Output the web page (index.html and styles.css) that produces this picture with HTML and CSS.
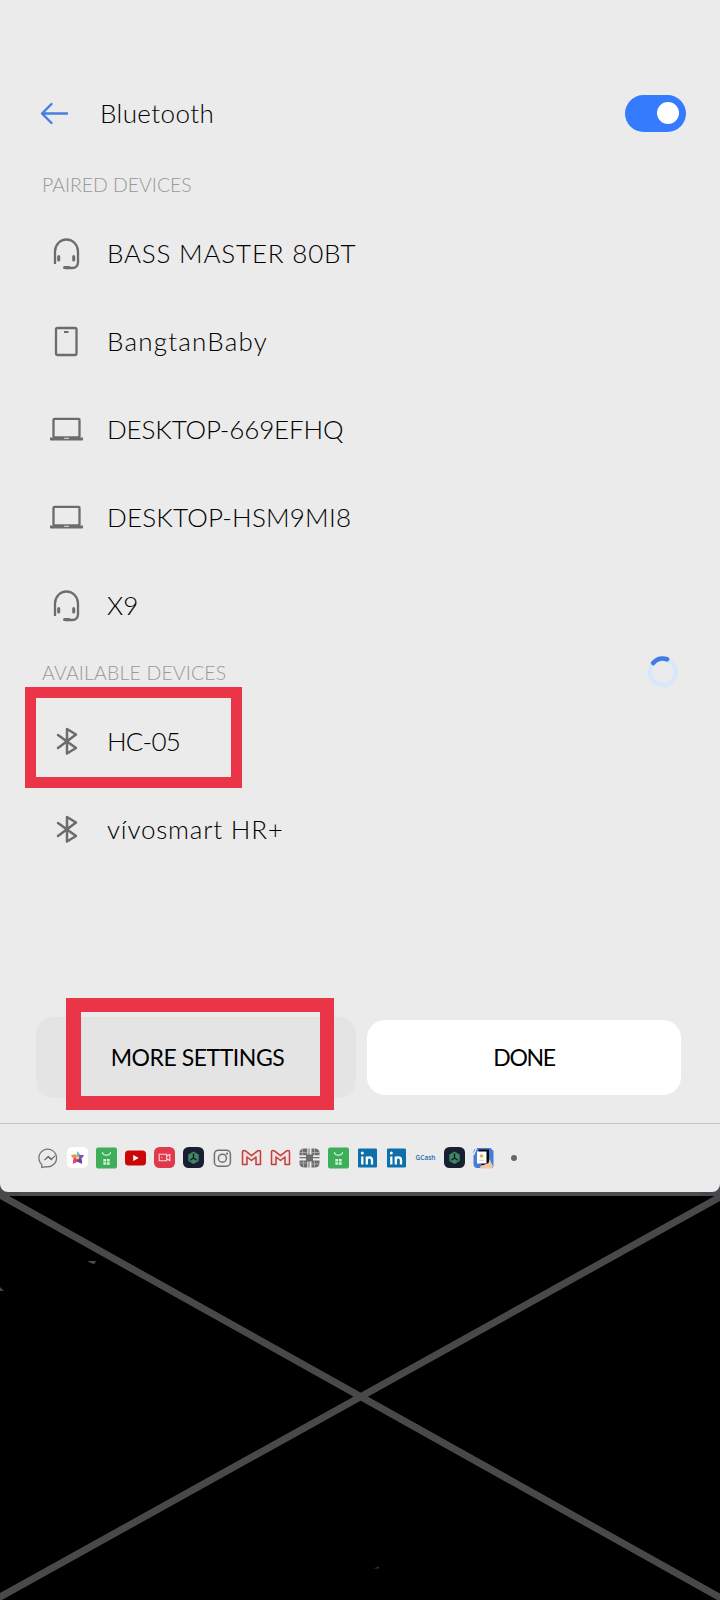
FILE: index.html
```html
<!DOCTYPE html>
<html lang="en">
<head>
<meta charset="utf-8">
<title>Bluetooth</title>
<link rel="stylesheet" href="styles.css">
</head>
<body>
<svg class="defs" width="0" height="0">
  <symbol id="headset" viewBox="0 0 34 34"><g fill="none" stroke="#6c6c6c" stroke-width="2.300"><path d="M6 28V15.500a11.500 12 0 0 1 23 0V26q0 6-6 6h-7" stroke-linejoin="round"/><path d="M15.500 31.500h4.500" stroke-width="3" stroke-linecap="round"/><path d="M9.700 20.500v3.500M24.700 20.500v3.500" stroke-width="3" stroke-linecap="round"/></g></symbol>
  <symbol id="laptop" viewBox="0 0 34 34"><rect x="4.500" y="6.900" width="26" height="18.500" rx="1" fill="none" stroke="#6c6c6c" stroke-width="2.300"/><path d="M1 25.500h33v2q0 1-1 1H2q-1 0-1-1z" fill="#6c6c6c"/><path d="M15 26.300h5" stroke="#ddd" stroke-width="1"/></symbol>
  <symbol id="tablet" viewBox="0 0 34 34"><rect x="7" y="4" width="20.500" height="27" rx="1.500" fill="none" stroke="#6c6c6c" stroke-width="2.300"/><path d="M15 8h4.500" stroke="#6c6c6c" stroke-width="2"/></symbol>
  <symbol id="bt" viewBox="0 0 34 34"><path d="M9 11l18 13-9 5.500V5l9 5.500L9 24" fill="none" stroke="#6c6c6c" stroke-width="2.500" stroke-linejoin="round" stroke-linecap="round"/></symbol>
  <symbol id="bag" viewBox="0 0 22 22"><rect x=".5" y=".5" width="21" height="21" rx="2" fill="#3eae5b"/><path d="M7 5q0 3.200 4 3.200t4-3.200" fill="none" stroke="#cff5d7" stroke-width="1.200"/><path d="M7.800 12h2.800v2.600H7.800zm3.600 0h2.800v2.600h-2.800zM7.800 15.200h2.800v2.600H7.800zm3.600 0h2.800v2.600h-2.800z" fill="#cff5d7"/></symbol>
  <symbol id="hex" viewBox="0 0 22 22"><rect x=".5" y="0" width="21" height="21" rx="5.500" fill="#171f30"/><path d="M11 4.500l5.200 3v6.500L11 17l-5.200-3V7.500z" fill="#3f8867"/><path d="M11 6.500V11l-3.300 2.300M11 11l3.300 2.300" fill="none" stroke="#101a22" stroke-width="1.400"/></symbol>
  <symbol id="gmail" viewBox="0 0 22 22"><path d="M2 4.700q0-1.300 1.300-1.300 1 0 2 .8L11 8.700l5.700-4.500q1-.8 2-.8Q20 3.400 20 4.700V17.500h-4.500V10L11 13.500 6.500 10v7.500H2z" fill="#f3dddd" stroke="#bd423e" stroke-width="1.500" stroke-linejoin="round"/></symbol>
  <symbol id="linkedin" viewBox="0 0 22 22"><rect x="1.500" y="1.500" width="19" height="19" rx="1.200" fill="#0e70aa"/><path d="M5.800 9.500v8M10.300 9.500v8M10.300 13q0-2.600 2.700-2.600 2.500 0 2.500 2.800v4.300" fill="none" stroke="#fff" stroke-width="2.300"/><circle cx="5.800" cy="6" r="1.500" fill="#fff"/></symbol>
</svg>

<main class="panel">
  <header class="appbar">
    <svg class="back" viewBox="0 0 30 24"><path d="M27 12.500H2M11.500 3L2 12.500l9.500 9.500" fill="none" stroke="#467fe0" stroke-width="2.400" stroke-linecap="round" stroke-linejoin="round"/></svg>
    <h1 class="title">Bluetooth</h1>
    <span class="switch"><span class="knob"></span></span>
  </header>

  <h2 class="section s-paired">PAIRED DEVICES</h2>
  <ul class="list">
    <li class="row"><svg class="icon"><use href="#headset"/></svg><span class="t-bass">BASS MASTER 80BT</span></li>
    <li class="row"><svg class="icon"><use href="#tablet"/></svg><span class="t-baby">BangtanBaby</span></li>
    <li class="row"><svg class="icon"><use href="#laptop"/></svg><span class="t-desk1">DESKTOP-669EFHQ</span></li>
    <li class="row"><svg class="icon"><use href="#laptop"/></svg><span class="t-desk2">DESKTOP-HSM9MI8</span></li>
    <li class="row"><svg class="icon"><use href="#headset"/></svg><span class="t-x9">X9</span></li>
  </ul>
  <div class="available">
    <h2 class="section s-avail">AVAILABLE DEVICES</h2>
    <svg class="spinner" viewBox="0 0 32 32"><circle cx="16" cy="16" r="13" fill="none" stroke="#d7e8fa" stroke-width="4.600"/><path d="M6.200 7A13 13 0 0 1 20 3.300" fill="none" stroke="#427ce2" stroke-width="4.600" stroke-linecap="round"/></svg>
  </div>
  <ul class="list">
    <li class="row"><svg class="icon"><use href="#bt"/></svg><span class="t-hc">HC-05</span><i class="mark mark-device"></i></li>
    <li class="row"><svg class="icon"><use href="#bt"/></svg><span class="t-vivo">vívosmart HR+</span></li>
  </ul>

  <div class="actions">
    <button class="btn more"><span class="t-more">MORE SETTINGS</span><i class="mark mark-more"></i></button>
    <button class="btn done"><span class="t-done">DONE</span></button>
  </div>

  <footer class="dock">
    <svg class="app" viewBox="0 0 22 22"><path d="M4.300 17.500A8.800 8.800 0 1 1 9 19.700L4.300 20.500z" fill="none" stroke="#747474" stroke-width="1.300"/><path d="M7 13l3.700-3.900 3.200 2.700 3.700-3-3.700 4.100-3.200-2.600z" fill="#666" stroke="#666"/></svg>
    <svg class="app" viewBox="0 0 22 22"><rect x=".5" width="21" height="21" rx="5" fill="#fff"/><g transform="translate(11 10.800)" stroke-width="1" stroke-linejoin="round"><path d="M0-6l2.200 3.500H-2.200L0 0z" fill="#65b9cf" stroke="#65b9cf"/><path d="M-2.200-3l-3.800.7 2.500 3.200L0 0z" fill="#f28b3c" stroke="#f28b3c"/><path d="M-3.500 1l-.7 4.500L0 3.500V0z" fill="#dd3f70" stroke="#dd3f70"/><path d="M0 0v3.500l4.200 2-.7-4.500z" fill="#6c3b9d" stroke="#6c3b9d"/><path d="M2.200-2.500l3.800.2L3.500 1 0 0z" fill="#7754b5" stroke="#7754b5"/><circle r="1.800" fill="#f6cd63"/></g></svg>
    <svg class="app"><use href="#bag"/></svg>
    <svg class="app" viewBox="0 0 22 22"><rect x=".5" y="3.500" width="21" height="15" rx="3.500" fill="#cc0606"/><path d="M8.700 8l5.500 3-5.500 3z" fill="#fff"/></svg>
    <svg class="app" viewBox="0 0 22 22"><rect x=".5" y="0" width="21" height="21" rx="5.500" fill="#df394b"/><path d="M5.700 7.200h7.500v6.500H5.700zM13.500 9l2.800-1.500v6L13.500 12M8 10.500h.8" fill="none" stroke="#ffd9df" stroke-width="1.100"/></svg>
    <svg class="app"><use href="#hex"/></svg>
    <svg class="app" viewBox="0 0 22 22"><g fill="none" stroke="#707070" stroke-width="1.500"><rect x="2.900" y="3.200" width="16" height="16" rx="4"/><circle cx="10.900" cy="11.200" r="4"/></g><circle cx="15.500" cy="6.700" r="1.100" fill="#707070"/></svg>
    <svg class="app"><use href="#gmail"/></svg>
    <svg class="app"><use href="#gmail"/></svg>
    <svg class="app" viewBox="0 0 22 22"><g fill="#6c6c6c"><path d="M6 1.500h2.800v6.800H1V6q0-4.500 5-4.500zM13 1.500h3q5 0 5 4.500v2.300h-8zM1 13.500h7.800v7H6q-5 0-5-4.500zM13 13.500h8V16q0 4.500-5 4.500h-3zM7.500 7.500h7v7h-7z"/><path d="M1 10h20v1.300H1zM10 1.500h1v19h-1z"/></g><path d="M4 1v7M1 5.500h7M16 1v7M13 5.500h8M5 14v6M1 16h7M16 14v6M13 17h8" stroke="#bdbdbd" stroke-width=".7"/></svg>
    <svg class="app"><use href="#bag"/></svg>
    <svg class="app"><use href="#linkedin"/></svg>
    <svg class="app"><use href="#linkedin"/></svg>
    <span class="app gcash">GCash</span>
    <svg class="app"><use href="#hex"/></svg>
    <svg class="app" viewBox="0 0 22 22"><path d="M1 5q0-3 3-4h14l3 3v15q0 2-2 2H4q-3-1-3-4z" fill="#477cdb"/><path d="M1 8l3-7" stroke="#edf3ff" stroke-width="1.400"/><path d="M6 2.500h10.500V18H9z" fill="#080808"/><rect x="4.500" y="4.500" width="9.500" height="12" fill="#fff"/><circle cx="9" cy="9" r="1.800" fill="#e3ac57"/><path d="M6.500 13.200h5" stroke="#f0c794"/><path d="M11 18l5-2 1-4 3.500 7-1 2.500H8l-.5-2z" fill="#f0c6a8"/></svg>
    <span class="app"><i class="dot"></i></span>
  </footer>
</main>

<svg class="void" viewBox="0 1192 720 408"><path d="M0 1185H720V1196H0z" fill="#4e4e4f"/><path d="M0 1192H20V1196H0zM700 1192h20v4h-20z" fill="#48484f"/><path d="M-8 1190.500L728 1602M728 1192.500L-8 1601.500" stroke="#494949" stroke-width="7"/><path d="M87 1261h9l-1.500 3-3-.7z" fill="#4c4c4c"/><path d="M0 1287l4 4H0z" fill="#444449"/><path d="M373 1568.500l6-2v2z" fill="#333"/></svg>
</body>
</html>
```

FILE: styles.css
```css
* { box-sizing: border-box; }
body {
  margin: 0;
  width: 720px;
  height: 1600px;
  overflow: hidden;
  background: #48484f;
  font-family: Lato, "Open Sans", sans-serif;
  font-weight: 300;
  color: #000;
  display: flex;
  flex-direction: column;
}
.defs { position: absolute; }
.panel {
  height: 1192px;
  flex: none;
  padding-top: 65px;
  background: #ebebeb;
  border-radius: 0 0 8px 8px;
  display: flex;
  flex-direction: column;
}
.appbar {
  height: 96px;
  flex: none;
  display: flex;
  align-items: center;
  padding: 0 34px 0 40px;
}
.back { width: 30px; height: 24px; }
.title { margin: 0 0 0 30px; padding-bottom: 1px; font-size: 26px; font-weight: 300; letter-spacing: 0.4px; }
.switch {
  width: 61px;
  height: 37px;
  margin-left: auto;
  padding: 7px;
  border-radius: 19px;
  background: #357bfe;
  display: flex;
  justify-content: flex-end;
}
.knob { width: 22px; height: 22px; border-radius: 50%; background: #fff; }
.section {
  height: 48px;
  margin: 0;
  padding-left: 42px;
  font-size: 19.5px;
  font-weight: 300;
  line-height: 48px;
  color: #999;
}
.list { margin: 0; padding: 0; list-style: none; }
.row {
  position: relative;
  height: 88px;
  padding-left: 49px;
  display: flex;
  align-items: center;
  gap: 24px;
  font-size: 26px;
  line-height: 32px;
  white-space: nowrap;
}
.icon { width: 34px; height: 34px; }
.available { display: flex; align-items: center; justify-content: space-between; padding-right: 41px; }
.spinner { width: 32px; height: 32px; margin-bottom: 2px; }
.mark { position: absolute; border: 11px solid #e93547; }
.mark-device { left: 25px; top: -10px; width: 217px; height: 101px; }
.mark-more { left: 30px; top: -19px; width: 268px; height: 112px; border-width: 14px 14px 14px 15px; }
.actions {
  margin-top: 144px;
  padding: 0 39px 0 36px;
  display: flex;
  justify-content: space-between;
  align-items: center;
}
.btn {
  position: relative;
  border: 0;
  padding: 0 0 1px;
  font: 400 23px Lato, "Open Sans", sans-serif;
  color: #000;
}
.more { width: 320px; height: 81px; padding-left: 3px; border-radius: 18px; background: #e4e4e4; }
.done { width: 314px; height: 75px; border-radius: 18px; background: #fff; }
.dock {
  height: 70px;
  margin-top: 25px;
  padding: 0 0 1px 34px;
  border-top: 1px solid #c2c2c2;
  display: flex;
  align-items: center;
}
.app { width: 29px; height: 22px; flex: none; display: flex; align-items: center; justify-content: center; }
.gcash { font: 600 6.5px "Open Sans", sans-serif; color: #2763b7; }
.dot { width: 6px; height: 6px; margin-left: 2px; border-radius: 50%; background: #666; }
.void { width: 720px; height: 408px; flex: none; background: #000; }
.s-paired { letter-spacing: -0.05px; }
.s-avail { letter-spacing: 0.15px; }
.t-bass { letter-spacing: 0.8px; }
.t-baby { letter-spacing: 1.2px; }
.t-desk1 { letter-spacing: -0.15px; }
.t-desk2 { letter-spacing: 0.2px; }
.t-x9 { letter-spacing: 0; }
.t-hc { letter-spacing: -0.8px; }
.t-vivo { letter-spacing: 0.8px; }
.t-more { letter-spacing: -0.45px; }
.t-done { letter-spacing: -1.3px; }
```
